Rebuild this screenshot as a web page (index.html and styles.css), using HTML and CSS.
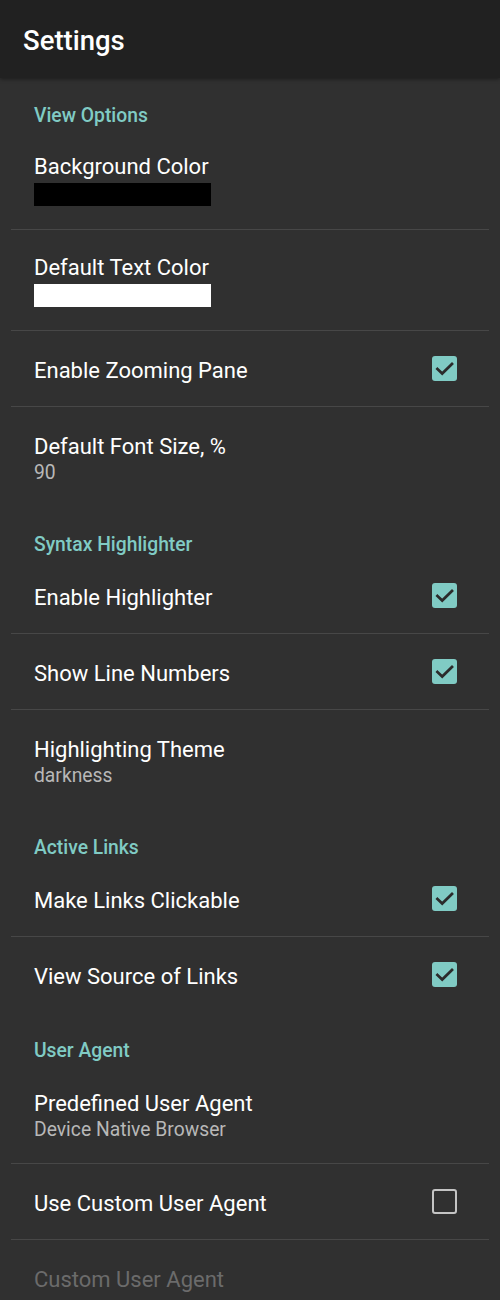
FILE: index.html
```html
<!DOCTYPE html>
<html>
<head>
<meta charset="utf-8">
<link rel="stylesheet" href="styles.css">
</head>
<body>
<div class="app">
  <header class="appbar"><h1 class="appbar-title">Settings</h1></header>
  <main class="list">
    <div class="cat">View Options</div>
    <div class="pref pref-swatch">
      <div class="pref-text">
        <div class="pref-title">Background Color</div>
        <div class="swatch swatch-black"></div>
      </div>
    </div>
    <div class="pref pref-swatch">
      <div class="pref-text">
        <div class="pref-title">Default Text Color</div>
        <div class="swatch swatch-white"></div>
      </div>
    </div>
    <div class="pref">
      <div class="pref-text"><div class="pref-title">Enable Zooming Pane</div></div>
      <span class="cb cb-on"><svg viewBox="0 0 24 24" width="25" height="25"><path d="M5.2 12.4l4.6 4.4L19.2 7.6" fill="none" stroke="#2b2b2b" stroke-width="2.6" stroke-linecap="square"/></svg></span>
    </div>
    <div class="pref last">
      <div class="pref-text">
        <div class="pref-title">Default Font Size, %</div>
        <div class="pref-summary">90</div>
      </div>
    </div>

    <div class="cat">Syntax Highlighter</div>
    <div class="pref">
      <div class="pref-text"><div class="pref-title">Enable Highlighter</div></div>
      <span class="cb cb-on"><svg viewBox="0 0 24 24" width="25" height="25"><path d="M5.2 12.4l4.6 4.4L19.2 7.6" fill="none" stroke="#2b2b2b" stroke-width="2.6" stroke-linecap="square"/></svg></span>
    </div>
    <div class="pref">
      <div class="pref-text"><div class="pref-title">Show Line Numbers</div></div>
      <span class="cb cb-on"><svg viewBox="0 0 24 24" width="25" height="25"><path d="M5.2 12.4l4.6 4.4L19.2 7.6" fill="none" stroke="#2b2b2b" stroke-width="2.6" stroke-linecap="square"/></svg></span>
    </div>
    <div class="pref last">
      <div class="pref-text">
        <div class="pref-title">Highlighting Theme</div>
        <div class="pref-summary">darkness</div>
      </div>
    </div>

    <div class="cat">Active Links</div>
    <div class="pref">
      <div class="pref-text"><div class="pref-title">Make Links Clickable</div></div>
      <span class="cb cb-on"><svg viewBox="0 0 24 24" width="25" height="25"><path d="M5.2 12.4l4.6 4.4L19.2 7.6" fill="none" stroke="#2b2b2b" stroke-width="2.6" stroke-linecap="square"/></svg></span>
    </div>
    <div class="pref last">
      <div class="pref-text"><div class="pref-title">View Source of Links</div></div>
      <span class="cb cb-on"><svg viewBox="0 0 24 24" width="25" height="25"><path d="M5.2 12.4l4.6 4.4L19.2 7.6" fill="none" stroke="#2b2b2b" stroke-width="2.6" stroke-linecap="square"/></svg></span>
    </div>

    <div class="cat">User Agent</div>
    <div class="pref">
      <div class="pref-text">
        <div class="pref-title">Predefined User Agent</div>
        <div class="pref-summary">Device Native Browser</div>
      </div>
    </div>
    <div class="pref">
      <div class="pref-text"><div class="pref-title">Use Custom User Agent</div></div>
      <span class="cb cb-off"></span>
    </div>
    <div class="pref last">
      <div class="pref-text"><div class="pref-title disabled">Custom User Agent</div></div>
    </div>
  </main>
</div>
</body>
</html>
```
FILE: styles.css
```css
html, body {
  margin: 0;
  padding: 0;
  background: #303030;
}
body {
  font-family: Roboto, "Noto Sans", "Liberation Sans", sans-serif;
  color: #ffffff;
  -webkit-font-smoothing: antialiased;
}
.app {
  width: 500px;
  height: 1300px;
  overflow: hidden;
  background: #303030;
}
.appbar {
  height: 78px;
  box-sizing: border-box;
  background: #212121;
  display: flex;
  align-items: center;
  padding: 3px 0 0 23px;
  box-shadow: 0 1px 4px rgba(0,0,0,0.45);
  position: relative;
  z-index: 1;
}
.appbar-title {
  margin: 0;
  font-size: 27.5px;
  font-weight: 500;
  color: #ffffff;
}
.list {
  display: flex;
  flex-direction: column;
}
.cat {
  height: 51px;
  box-sizing: border-box;
  padding: 27px 0 2px 34px;
  line-height: 22px;
  font-size: 19.3px;
  font-weight: 500;
  color: #80cbc4;
}
.pref {
  display: flex;
  align-items: center;
  margin: 0 11px;
  padding: 26px 32px 22px 23px;
  border-bottom: 1px solid #474747;
}
.pref.pref-swatch {
  padding-top: 24px;
  padding-bottom: 23px;
}
.pref.last {
  border-bottom-color: transparent;
}
.pref-text {
  flex: 1;
  display: flex;
  flex-direction: column;
}
.pref-title {
  font-size: 22px;
  line-height: 27px;
  color: #ffffff;
}
.pref-title.disabled {
  color: #6b6b6b;
}
.pref-summary {
  margin-top: 2px;
  font-size: 19.3px;
  line-height: 22px;
  color: #b8b8b8;
}
.swatch {
  width: 177px;
  height: 23px;
  margin-top: 3px;
}
.swatch-black { background: #000000; }
.swatch-white { background: #ffffff; }
.cb {
  width: 25px;
  height: 25px;
  box-sizing: border-box;
  border-radius: 3px;
  flex: none;
  display: block;
  margin-top: -4px;
}
.cb svg { display: block; }
.cb-on {
  background: #80cbc4;
}
.cb-off {
  border: 2.5px solid #c4c4c4;
}
```
